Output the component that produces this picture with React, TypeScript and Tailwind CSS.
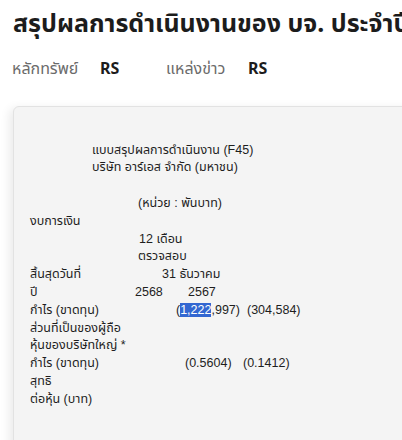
const font = { fontFamily: '"Noto Sans", "Noto Sans Thai", Tahoma, sans-serif' };
const panelFont = { fontFamily: '"Liberation Sans", "Noto Sans Thai", "Noto Sans", sans-serif' };

function Row({ children, className = "" }: { children?: React.ReactNode; className?: string }) {
  return <div className={`flex h-[17.8px] items-center whitespace-nowrap ${className}`}>{children}</div>;
}

export default function App() {
  return (
    <div className="w-[402px] h-[440px] overflow-hidden bg-white text-[#222]" style={font}>
      <h1 className="pl-[13px] pt-[6px] text-[25px] leading-[32px] font-bold whitespace-nowrap text-[#1c1c1c]">
        สรุปผลการดำเนินงานของ บจ. ประจำปี 2568 (F45)
      </h1>
      <div className="flex items-center pl-[12px] mt-[18px] h-[24px] text-[16px] whitespace-nowrap">
        <span className="shrink-0 text-[#6b6b6b] w-[88px]">หลักทรัพย์</span>
        <span className="shrink-0 font-bold text-[#1c1c1c] w-[66px]">RS</span>
        <span className="shrink-0 text-[#6b6b6b] w-[82px]">แหล่งข่าว</span>
        <span className="shrink-0 font-bold text-[#1c1c1c]">RS</span>
      </div>
      <div
        className="ml-[13px] mt-[26px] w-[420px] h-[360px] rounded-[6px] border border-[#e2e2e2] bg-[#f4f4f4] shadow-[-4px_2px_10px_rgba(0,0,0,0.08)] pl-[16px] pt-[34px] text-[12.5px] text-[#1e1e1e]"
        style={panelFont}
      >
        <Row><span className="pl-[62px]">แบบสรุปผลการดำเนินงาน (F45)</span></Row>
        <Row><span className="pl-[62px]">บริษัท อาร์เอส จำกัด (มหาชน)</span></Row>
        <Row />
        <Row><span className="pl-[108px]">(หน่วย : พันบาท)</span></Row>
        <Row>งบการเงิน</Row>
        <Row><span className="pl-[109px]">12 เดือน</span></Row>
        <Row><span className="pl-[108px]">ตรวจสอบ</span></Row>
        <Row>
          <span className="shrink-0 w-[132px]">สิ้นสุดวันที่</span>
          <span className="shrink-0">31 ธันวาคม</span>
        </Row>
        <Row>
          <span className="shrink-0 w-[105px]">ปี</span>
          <span className="shrink-0 w-[53px]">2568</span>
          <span className="shrink-0">2567</span>
        </Row>
        <Row>
          <span className="shrink-0 w-[146px]">กำไร (ขาดทุน)</span>
          <span className="shrink-0 w-[71px]">
            (<span className="bg-[#3367d1] text-white">1,222</span>,997)
          </span>
          <span className="shrink-0">(304,584)</span>
        </Row>
        <Row>ส่วนที่เป็นของผู้ถือ</Row>
        <Row>หุ้นของบริษัทใหญ่ *</Row>
        <Row>
          <span className="shrink-0 w-[155px]">กำไร (ขาดทุน)</span>
          <span className="shrink-0 w-[58px]">(0.5604)</span>
          <span className="shrink-0">(0.1412)</span>
        </Row>
        <Row>สุทธิ</Row>
        <Row>ต่อหุ้น (บาท)</Row>
      </div>
    </div>
  );
}
